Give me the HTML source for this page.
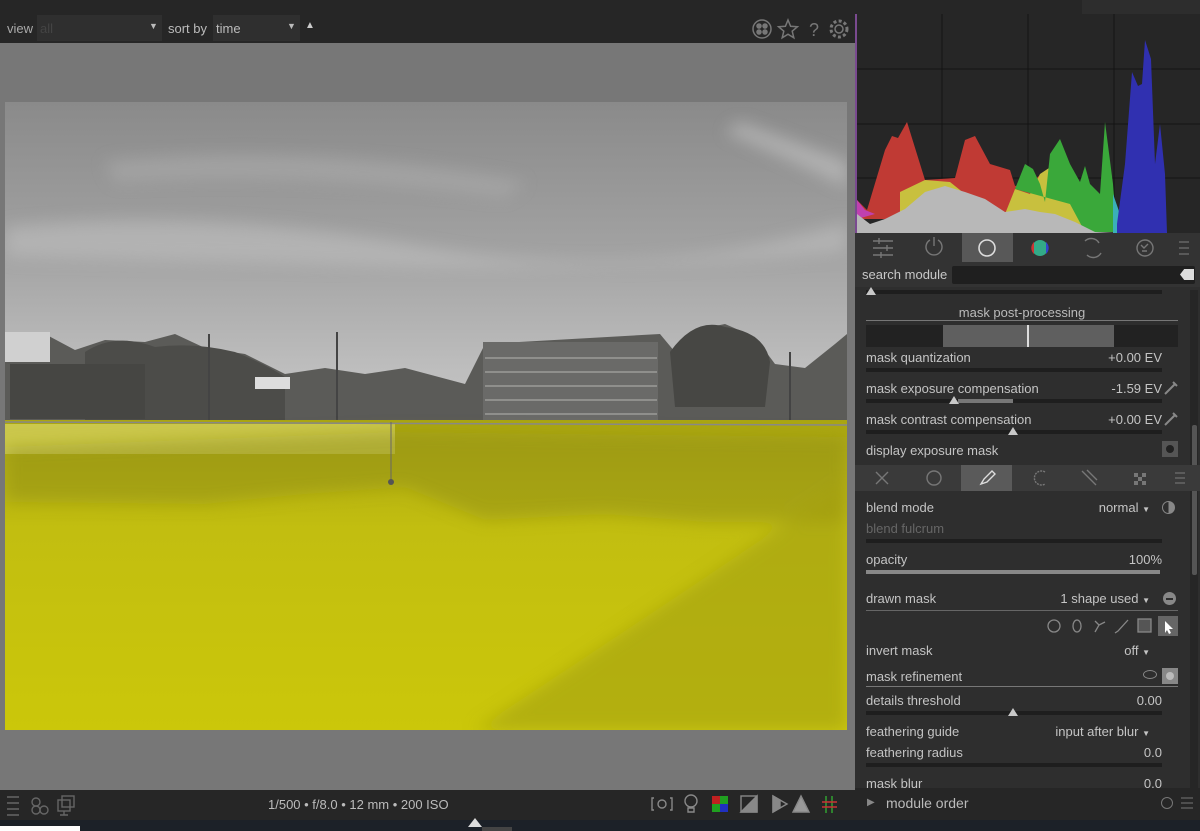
<!DOCTYPE html>
<html><head><meta charset="utf-8"><style>
*{margin:0;padding:0;box-sizing:border-box}
body{width:1200px;height:831px;overflow:hidden;background:#262626;font-family:"Liberation Sans",sans-serif;font-size:13px;color:#c4c4c4;position:relative}
.a{position:absolute}
.row{position:absolute;left:866px;width:296px}
.lbl{position:absolute;left:0;top:0}
.val{position:absolute;right:0;top:0}
.sl{position:absolute;left:0;width:296px;height:4px;background:#1e1e1e}
.tri{position:absolute;width:0;height:0;border-left:5px solid transparent;border-right:5px solid transparent;border-bottom:8px solid #c8c8c8}
</style></head><body>
<!-- top bar -->
<div class="a" style="left:0;top:0;width:855px;height:43px;background:#262626"></div>
<div class="a" style="left:7px;top:21px;color:#aaa">view</div>
<div class="a" style="left:37px;top:15px;width:125px;height:26px;background:#2f2f2f;color:#444;padding:6px 3px">all</div>
<div class="a" style="left:149px;top:21px;font-size:9px;color:#bbb">▼</div>
<div class="a" style="left:168px;top:21px;color:#bbb">sort by</div>
<div class="a" style="left:213px;top:15px;width:87px;height:26px;background:#2f2f2f;color:#bbb;padding:6px 3px">time</div>
<div class="a" style="left:287px;top:21px;font-size:9px;color:#bbb">▼</div>
<div class="a" style="left:305px;top:20px;font-size:10px;color:#ccc">▲</div>
<svg class="a" style="left:750px;top:17px" width="102" height="24" fill="none" stroke="#777" stroke-width="1.5">
<circle cx="12" cy="12" r="9"/><circle cx="9" cy="9" r="2" fill="#777"/><circle cx="15" cy="9" r="2" fill="#777"/><circle cx="9" cy="15" r="2" fill="#777"/><circle cx="15" cy="15" r="2" fill="#777"/>
<path d="M38 3l2.6 6.3 6.8.5-5.2 4.4 1.6 6.6L38 17.2 32.2 20.8l1.6-6.6-5.2-4.4 6.8-.5z"/>
<text x="59" y="19" fill="#777" stroke="none" font-size="18" font-family="Liberation Sans">?</text>
<circle cx="89" cy="12" r="4"/><circle cx="89" cy="12" r="8" stroke-dasharray="3 2.3" stroke-width="3"/>
</svg>
<!-- center area -->
<div class="a" style="left:0;top:43px;width:855px;height:747px;background:#777"></div>
<svg class="a" style="left:5px;top:102px" width="842" height="628">
<defs>
<linearGradient id="sky" x1="0" y1="0" x2="0" y2="1"><stop offset="0" stop-color="#8a8a8a"/><stop offset=".45" stop-color="#a2a2a2"/><stop offset=".8" stop-color="#bdbdbd"/><stop offset="1" stop-color="#c6c6c6"/></linearGradient>
<linearGradient id="wat" x1="0" y1="0" x2="0" y2="1"><stop offset="0" stop-color="#aaa612"/><stop offset=".35" stop-color="#c2be10"/><stop offset="1" stop-color="#cbc70a"/></linearGradient>
<filter id="bl"><feGaussianBlur stdDeviation="8"/></filter>
</defs>
<rect width="842" height="330" fill="url(#sky)"/>
<g filter="url(#bl)" opacity=".5">
<path d="M0 125 Q200 105 420 145 T842 120 L842 150 Q600 170 400 165 T0 155Z" fill="#c4c4c4"/>
<path d="M720 30 Q790 60 842 85 L842 60 Q790 40 735 20Z" fill="#cfcfcf"/>
<path d="M100 60 Q300 40 520 80 L500 95 Q300 70 110 80Z" fill="#b0b0b0"/>
</g>
<!-- treeline/buildings -->
<path d="M0 245 L40 232 L70 248 L100 238 L140 240 L170 232 L200 246 L240 252 L280 272 L320 266 L360 272 L400 266 L460 282 L480 242 L655 232 L670 250 L690 228 L720 222 L750 235 L770 262 L800 266 L830 242 L842 232 L842 320 L0 320Z" fill="#5b5b58"/>
<path d="M80 250 Q110 230 150 245 Q190 240 230 250 Q260 262 280 275 L280 318 L80 318Z" fill="#4c4c49"/>
<rect x="5" y="262" width="135" height="55" fill="#464643"/>
<rect x="0" y="230" width="45" height="30" fill="#d0d0d0"/>
<rect x="478" y="240" width="175" height="78" fill="#6a6a68"/>
<g stroke="#8f8f8c" stroke-width="2"><line x1="480" y1="256" x2="652" y2="256"/><line x1="480" y1="270" x2="652" y2="270"/><line x1="480" y1="284" x2="652" y2="284"/><line x1="480" y1="298" x2="652" y2="298"/><line x1="480" y1="312" x2="652" y2="312"/></g>
<path d="M665 250 Q690 215 720 225 Q760 230 765 260 L760 305 L670 305Z" fill="#474744"/>
<rect x="250" y="275" width="35" height="12" fill="#ddd"/>
<g stroke="#444" stroke-width="2"><line x1="204" y1="232" x2="204" y2="318"/><line x1="332" y1="230" x2="332" y2="318"/><line x1="785" y1="250" x2="785" y2="318"/></g>
<!-- water -->
<rect y="318" width="842" height="310" fill="url(#wat)"/>
<rect y="322" width="390" height="30" fill="#d8d565" opacity=".7"/>
<g filter="url(#bl)">
<path d="M0 345 L390 330 L842 335 L842 420 L700 420 L600 412 L480 418 L400 385 L300 392 L200 402 L0 400Z" fill="#8c8a14" opacity=".45"/>
<path d="M842 380 L842 628 L470 628 Q650 510 842 380Z" fill="#a3a016" opacity=".6"/>
</g>
<line x1="0" y1="320" x2="842" y2="323" stroke="#888" stroke-width="1.5"/>
<line x1="386" y1="320" x2="386" y2="378" stroke="#666"/>
<circle cx="386" cy="380" r="3" fill="#555"/>
</svg>
<!-- bottom bar -->
<div class="a" style="left:0;top:790px;width:855px;height:30px;background:#262626"></div>
<div class="a" style="left:0;top:820px;width:1200px;height:11px;background:#1c2128"></div>
<div class="a" style="left:0;top:826px;width:80px;height:5px;background:#fff"></div>
<div class="a" style="left:468px;top:818px;width:0;height:0;border-left:7px solid transparent;border-right:7px solid transparent;border-bottom:9px solid #ddd"></div>
<div class="a" style="left:482px;top:827px;width:30px;height:4px;background:#444"></div>
<svg class="a" style="left:4px;top:793px" width="74" height="24" fill="none" stroke="#666" stroke-width="1.4">
<path d="M3 4h12M3 10h12M3 16h12M3 22h12"/><circle cx="32" cy="9" r="4"/><circle cx="32" cy="17" r="4"/><circle cx="40" cy="17" r="4"/>
<rect x="58" y="3" width="12" height="11"/><rect x="54" y="7" width="12" height="11"/><path d="M60 18v4M56 22h8"/>
</svg>
<div class="a" style="left:268px;top:797px;color:#bbb;font-size:13px">1/500 • f/8.0 • 12 mm • 200 ISO</div>
<svg class="a" style="left:650px;top:792px" width="200" height="26" fill="none" stroke="#888" stroke-width="1.4">
<path d="M4 6h-2v12h2M20 6h2v12h-2"/><circle cx="12" cy="12" r="4"/>
<circle cx="41" cy="9" r="6"/><path d="M38 16h6v4h-6z"/>
<rect x="62" y="4" width="8" height="8" fill="#c02020" stroke="none"/><rect x="70" y="4" width="8" height="8" fill="#20a020" stroke="none"/><rect x="62" y="12" width="8" height="8" fill="#20a020" stroke="none"/><rect x="70" y="12" width="8" height="8" fill="#2030c0" stroke="none"/>
<rect x="91" y="4" width="16" height="16"/><path d="M91 20L107 4V20Z" fill="#888"/>
<path d="M123 4l14 8-14 8z"/><path d="M123 4l7 4v8l-7 4z" fill="#888"/>
<path d="M151 4l8 16h-16z" fill="#999"/>
<path d="M176 4v17M182 4v17" stroke="#3a3"/><path d="M172 10h15M172 15h15" stroke="#c33"/>
</svg>
<!-- right panel -->
<div class="a" style="left:855px;top:0;width:345px;height:14px;background:#262626"></div>
<div class="a" style="left:1082px;top:0;width:118px;height:14px;background:#2d2d2d"></div>
<svg class="a" style="left:855px;top:14px" width="345" height="219">
<rect width="345" height="219" fill="#262626"/>
<g stroke="#141414" stroke-width="1"><line x1="87" y1="0" x2="87" y2="219"/><line x1="173" y1="0" x2="173" y2="219"/><line x1="259" y1="0" x2="259" y2="219"/><line x1="0" y1="55" x2="345" y2="55"/><line x1="0" y1="110" x2="345" y2="110"/><line x1="0" y1="164" x2="345" y2="164"/></g>
<line x1="1" y1="0" x2="1" y2="219" stroke="#7a4a90" stroke-width="2"/>
<polygon fill="#c03a34" points="2,186 12,196 30,136 37,122 43,124 52,108 70,166 100,164 110,126 120,122 135,150 155,156 160,172 175,170 185,161 190,205 2,205"/>
<polygon fill="#c8c03e" points="45,178 70,166 95,168 110,180 125,188 150,200 160,175 175,180 185,160 200,150 215,175 225,188 240,200 250,215 260,218 100,218 45,210"/>
<polygon fill="#3aa83a" points="160,175 170,150 178,155 185,170 190,188 195,140 205,125 215,150 225,168 230,152 235,170 245,180 250,108 258,170 262,218 230,218 215,190"/>
<polygon fill="#3ab0b8" points="258,180 265,200 280,210 285,219 258,219"/>
<polygon fill="#3030b0" points="262,210 270,150 277,58 283,72 287,70 290,26 296,45 300,150 305,110 310,160 312,219 262,219"/>
<polygon fill="#c040b0" points="2,186 10,196 20,200 2,205"/>
<polygon fill="#b8b8b8" points="2,200 15,210 30,205 50,195 70,178 90,172 110,178 130,185 150,198 170,195 185,198 200,200 220,208 240,218 260,219 300,219 330,219 2,219"/>
</svg>
<div class="a" style="left:855px;top:233px;width:345px;height:30px;background:#333"></div>
<div class="a" style="left:962px;top:233px;width:51px;height:29px;background:#585858"></div>
<svg class="a" style="left:855px;top:233px" width="345" height="30" fill="none" stroke="#777" stroke-width="1.4">
<path d="M18 8h20M18 15h20M18 22h20"/><path d="M24 5v6M32 12v6M26 19v6"/>
<path d="M75 7a8 8 0 1 0 8 0M79 4v9"/>
<circle cx="132" cy="15" r="8" stroke="#ddd" stroke-width="1.6"/>
<circle cx="185" cy="15" r="8" fill="#3a8" stroke="none"/><path d="M179 9a8 8 0 0 0 0 12z" fill="#c33" stroke="none"/><path d="M191 9a8 8 0 0 1 0 12z" fill="#34c" stroke="none"/>
<path d="M230 8a9 9 0 0 1 14 2M246 20a9 9 0 0 1-14 2"/>
<circle cx="290" cy="15" r="8"/><path d="M286 12l3 3 4-4M287 18h5"/>
<path d="M324 9h10M324 15h10M324 21h10" stroke="#666"/>
</svg>
<div class="a" style="left:855px;top:263px;width:345px;height:24px;background:#333"></div>
<div class="a" style="left:862px;top:267px;color:#c8c8c8">search module</div>
<div class="a" style="left:952px;top:266px;width:243px;height:18px;background:#1f1f1f;border-radius:2px"></div>
<div class="a" style="left:1180px;top:269px;width:14px;height:11px;background:#ddd;clip-path:polygon(30% 0,100% 0,100% 100%,30% 100%,0 50%)"></div>
<div class="a" style="left:855px;top:287px;width:345px;height:178px;background:#2e2e2e"></div>
<div class="a" style="left:855px;top:489px;width:345px;height:301px;background:#2e2e2e"></div>
<div class="a" style="left:1190px;top:290px;width:8px;height:500px;background:#262626"></div>
<div class="a" style="left:1192px;top:425px;width:5px;height:150px;background:#555;border-radius:2px"></div>
<div class="sl" style="left:866px;top:290px;width:296px"></div>
<div class="tri" style="left:866px;top:287px"></div>
<div class="a" style="left:866px;top:305px;width:312px;text-align:center;color:#bbb">mask post-processing</div>
<div class="a" style="left:866px;top:320px;width:312px;height:1px;background:#777"></div>
<div class="a" style="left:866px;top:325px;width:312px;height:22px;background:#222"></div>
<div class="a" style="left:943px;top:325px;width:171px;height:22px;background:#5f5f5f"></div>
<div class="a" style="left:1027px;top:325px;width:2px;height:22px;background:#ddd"></div>
<div class="row" style="top:350px"><span class="lbl">mask quantization</span><span class="val">+0.00 EV</span></div>
<div class="sl" style="left:866px;top:368px"></div>
<div class="row" style="top:381px"><span class="lbl">mask exposure compensation</span><span class="val">-1.59 EV</span></div>
<div class="sl" style="left:866px;top:399px"></div>
<div class="a" style="left:958px;top:399px;width:55px;height:4px;background:#777"></div>
<div class="tri" style="left:949px;top:396px"></div>
<div class="row" style="top:412px"><span class="lbl">mask contrast compensation</span><span class="val">+0.00 EV</span></div>
<div class="sl" style="left:866px;top:430px"></div>
<div class="tri" style="left:1008px;top:427px"></div>
<svg class="a" style="left:1163px;top:378px" width="18" height="50" stroke="#888" stroke-width="2" fill="none"><path d="M2 16L12 6M10 4l4 4M2 47L12 37M10 35l4 4"/></svg>
<div class="row" style="top:443px"><span class="lbl">display exposure mask</span></div>
<div class="a" style="left:1162px;top:441px;width:16px;height:16px;background:#555"></div>
<div class="a" style="left:1166px;top:445px;width:8px;height:8px;border-radius:50%;background:#222"></div>
<!-- blend tabs -->
<div class="a" style="left:855px;top:465px;width:345px;height:26px;background:#3a3a3a"></div>
<div class="a" style="left:961px;top:465px;width:51px;height:26px;background:#5a5a5a"></div>
<svg class="a" style="left:855px;top:465px" width="345" height="26" fill="none" stroke="#777" stroke-width="1.4">
<path d="M21 7l12 12M33 7L21 19"/><circle cx="79" cy="13" r="7"/>
<path d="M126 19l3-5 8-8 3 3-8 8z" stroke="#ddd"/>
<path d="M190 7a7 7 0 1 0 0 12" stroke-dasharray="2 1"/>
<path d="M227 6l14 14M232 5l10 10"/>
<path d="M279 8h4v4h-4zM287 8h4v4h-4zM283 12h4v4h-4zM279 16h4v4h-4zM287 16h4v4h-4z" fill="#777" stroke="none"/>
<path d="M320 8h10M320 13h10M320 18h10" stroke="#666"/>
</svg>
<div class="row" style="top:500px"><span class="lbl">blend mode</span><span class="val" style="right:12px">normal <span style="font-size:8px">▼</span></span></div>
<div class="a" style="left:1162px;top:501px;width:13px;height:13px;border-radius:50%;border:1.5px solid #888;background:linear-gradient(90deg,transparent 50%,#888 50%)"></div>
<div class="row" style="top:521px;color:#666">blend fulcrum</div>
<div class="sl" style="left:866px;top:539px"></div>
<div class="row" style="top:552px"><span class="lbl">opacity</span><span class="val">100%</span></div>
<div class="a" style="left:866px;top:570px;width:294px;height:4px;background:#888"></div>
<div class="row" style="top:591px"><span class="lbl">drawn mask</span><span class="val" style="right:12px">1 shape used <span style="font-size:8px">▼</span></span></div>
<div class="a" style="left:1163px;top:592px;width:13px;height:13px;border-radius:50%;background:#888"></div>
<div class="a" style="left:1166px;top:598px;width:7px;height:1.5px;background:#2e2e2e"></div>
<div class="a" style="left:866px;top:610px;width:312px;height:1px;background:#666"></div>
<svg class="a" style="left:1045px;top:615px" width="135" height="22" fill="none" stroke="#888" stroke-width="1.3">
<circle cx="9" cy="11" r="6"/><ellipse cx="32" cy="11" rx="4" ry="6"/><path d="M50 17l4-7 6-3M54 10l-4-4"/><path d="M70 18l3-2 10-11"/><rect x="93" y="4" width="13" height="13" fill="#555"/>
<rect x="113" y="1" width="20" height="20" fill="#666" stroke="none"/><path d="M120 6l8 8h-4l2 4-2 1-2-4-2 3z" fill="#fff" stroke="none"/>
</svg>
<div class="row" style="top:643px"><span class="lbl">invert mask</span><span class="val" style="right:12px">off <span style="font-size:8px">▼</span></span></div>
<div class="row" style="top:669px"><span class="lbl">mask refinement</span></div>
<div class="a" style="left:1143px;top:670px;width:14px;height:9px;border-radius:50%;border:1.3px solid #888"></div>
<div class="a" style="left:1162px;top:668px;width:16px;height:16px;background:#888"></div>
<div class="a" style="left:1166px;top:672px;width:8px;height:8px;border-radius:50%;background:#bbb"></div>
<div class="a" style="left:866px;top:686px;width:312px;height:1px;background:#777"></div>
<div class="row" style="top:693px"><span class="lbl">details threshold</span><span class="val">0.00</span></div>
<div class="sl" style="left:866px;top:711px"></div>
<div class="tri" style="left:1008px;top:708px"></div>
<div class="row" style="top:724px"><span class="lbl">feathering guide</span><span class="val" style="right:12px">input after blur <span style="font-size:8px">▼</span></span></div>
<div class="row" style="top:745px"><span class="lbl">feathering radius</span><span class="val">0.0</span></div>
<div class="sl" style="left:866px;top:763px"></div>
<div class="row" style="top:776px"><span class="lbl">mask blur</span><span class="val">0.0</span></div>
<div class="a" style="left:855px;top:788px;width:345px;height:32px;background:#262626"></div>
<div class="a" style="left:867px;top:797px;font-size:10px;color:#888">▶</div>
<div class="a" style="left:886px;top:795px;font-size:14px;color:#bbb">module order</div>
<div class="a" style="left:1161px;top:797px;width:12px;height:12px;border-radius:50%;border:1.3px solid #777"></div>
<svg class="a" style="left:1180px;top:796px" width="14" height="14" stroke="#777"><path d="M1 2h12M1 7h12M1 12h12"/></svg>
</body></html>
